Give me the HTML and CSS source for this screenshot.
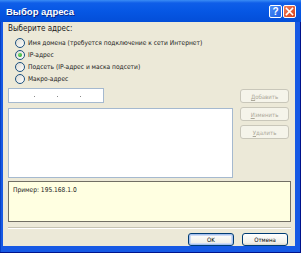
FILE: index.html
```html
<!DOCTYPE html>
<html lang="ru">

<head>
    <meta charset="UTF-8">
    <title>Выбор адреса</title>
    <link rel="stylesheet" href="styles.css">
</head>

<body>
    <div class="window">
        <div class="titlebar">
            <span class="title">Выбор адреса</span>
            <div class="caption-buttons">
                <span class="cap help">?</span>
                <span class="cap close">
                    <svg width="9" height="9" viewBox="0 0 9 9">
                        <path d="M1.5 1.5 L7.5 7.5 M7.5 1.5 L1.5 7.5" stroke="#fff" stroke-width="1.6" stroke-linecap="square" />
                    </svg>
                </span>
            </div>
        </div>

        <div class="frame">
            <div class="dialog">
                <div class="prompt">Выберите адрес:</div>

                <div class="options">
                    <div class="option"><span class="radio"></span>Имя домена (требуется подключение к сети Интернет)</div>
                    <div class="option"><span class="radio checked"></span>IP-адрес</div>
                    <div class="option"><span class="radio"></span>Подсеть (IP-адрес и маска подсети)</div>
                    <div class="option"><span class="radio"></span>Макро-адрес</div>
                </div>

                <div class="main">
                    <div class="left">
                        <div class="ip-field">
                            <span class="ip-dot"></span>
                            <span class="ip-dot"></span>
                            <span class="ip-dot"></span>
                        </div>
                        <div class="listbox"></div>
                    </div>
                    <div class="side">
                        <button class="btn" disabled><u>Д</u>обавить</button>
                        <button class="btn" disabled><u>И</u>зменить</button>
                        <button class="btn" disabled><u>У</u>далить</button>
                    </div>
                </div>

                <div class="hint">Пример: 195.168.1.0</div>

                <div class="separator"></div>

                <div class="footer">
                    <button class="btn active default">OK</button>
                    <button class="btn active">Отмена</button>
                </div>
            </div>
        </div>
    </div>
</body>

</html>
```

FILE: styles.css
```css
* {
    margin: 0;
    padding: 0;
    box-sizing: border-box;
}

body {
    width: 301px;
    height: 253px;
    overflow: hidden;
    font-family: 'DejaVu Sans Condensed', 'Liberation Sans', Arial, sans-serif;
    font-size: 6.6px;
    color: #1a1a1a;
    background: #0a4bd8;
}

.window {
    width: 301px;
    height: 253px;
    display: flex;
    flex-direction: column;
}

/* Title bar */
.titlebar {
    height: 22px;
    flex-shrink: 0;
    display: flex;
    align-items: center;
    justify-content: space-between;
    padding: 0 5px 0 6px;
    background: linear-gradient(#3a8cf5 0, #0f5ee8 3px, #0657e4 50%, #034ed8 100%);
}

.title {
    color: #fff;
    font-family: 'Liberation Sans', Arial, sans-serif;
    font-weight: bold;
    font-size: 9.5px;
    text-shadow: 1px 1px 0 #0a2a8a;
}

.caption-buttons {
    display: flex;
    gap: 1px;
}

.cap {
    width: 13px;
    height: 13px;
    border: 1px solid #fff;
    border-radius: 2px;
    display: flex;
    align-items: center;
    justify-content: center;
    color: #fff;
    font-family: 'Liberation Sans', Arial, sans-serif;
    font-weight: bold;
    font-size: 10px;
}

.help {
    background: linear-gradient(135deg, #4c8ff8, #1d5fe3);
}

.close {
    background: linear-gradient(135deg, #ef7e5c, #d6421c);
}

/* Window frame */
.frame {
    flex: 1;
    padding: 0 5px 6px 3px;
    background: #1659e4;
    border-right: 1px solid #00138c;
    border-bottom: 1px solid #00138c;
    box-shadow: inset 1px 0 0 #0841c4;
}

.dialog {
    height: 100%;
    background: #ece9d8;
    padding: 1px 4px 0 5px;
    display: flex;
    flex-direction: column;
}

.prompt {
    height: 12px;
    line-height: 12px;
    font-size: 8px;
}

.options {
    margin-top: 2px;
    padding-left: 7px;
}

.option {
    height: 12px;
    display: flex;
    align-items: center;
    gap: 3px;
}

.radio {
    width: 10px;
    height: 10px;
    border-radius: 50%;
    border: 1px solid #1c5180;
    background: linear-gradient(135deg, #dcdbd3, #fff);
    display: flex;
    align-items: center;
    justify-content: center;
}

.radio.checked::after {
    content: '';
    width: 4px;
    height: 4px;
    border-radius: 50%;
    background: radial-gradient(circle at 35% 35%, #6fdc6f, #1e9a1e);
}

/* Address input, list and side buttons */
.main {
    margin-top: 3px;
    display: flex;
}

.left {
    width: 225px;
    display: flex;
    flex-direction: column;
    gap: 5px;
}

.ip-field {
    width: 96px;
    height: 15px;
    background: #fff;
    border: 1px solid #a5b9cf;
    display: flex;
    align-items: center;
    gap: 22px;
    padding: 2px 0 0 25px;
}

.ip-dot {
    width: 1px;
    height: 1px;
    background: #8a8a8a;
}

.listbox {
    height: 70px;
    background: #fff;
    border: 1px solid #a5b9cf;
}

.side {
    width: 49px;
    margin-left: auto;
    margin-right: 2px;
    padding-top: 1px;
    display: flex;
    flex-direction: column;
    gap: 4px;
}

.btn {
    height: 14px;
    font-family: inherit;
    font-size: 6px;
    border-radius: 3px;
    border: 1px solid #c9c7ba;
    background: #f5f4ea;
    color: #aca899;
}

.btn u {
    text-decoration: underline;
}

/* Hint box */
.hint {
    margin-top: 3px;
    height: 41px;
    background: #ffffe1;
    border: 1px solid #716f64;
    padding: 3px 4px;
    line-height: 10px;
}

.separator {
    margin-top: 5px;
    height: 2px;
    border-top: 1px solid #c5c2b2;
    border-bottom: 1px solid #fff;
}

.footer {
    margin-top: 4px;
    margin-right: 3px;
    display: flex;
    justify-content: flex-end;
    gap: 8px;
}

.btn.active {
    width: 46px;
    height: 13px;
    color: #000;
    border-color: #003c74;
    background: linear-gradient(#fff, #f0efe9 80%, #d8d3c8);
}

.btn.default {
    box-shadow: inset 0 0 0 1px #a6c1ef, inset 0 0 0 2px #cfdcf5;
}
```
